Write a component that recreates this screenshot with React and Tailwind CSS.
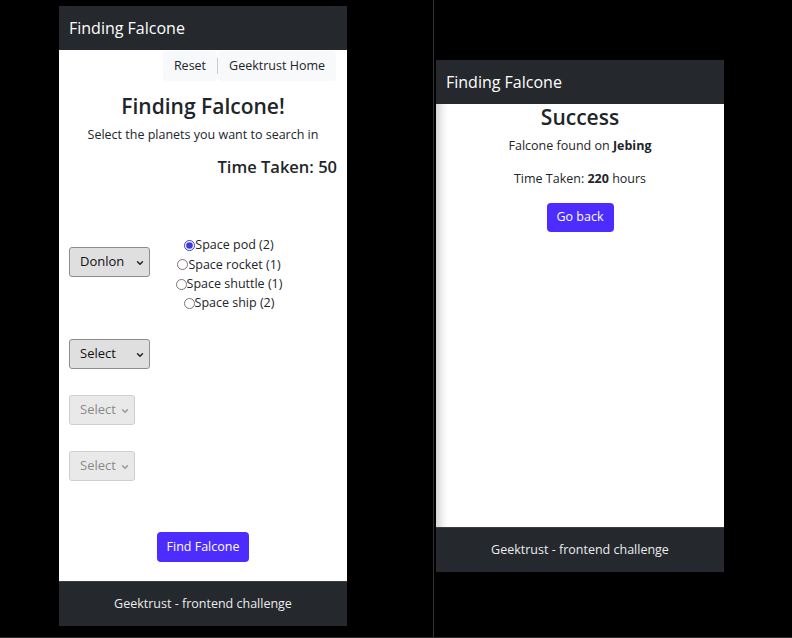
import { ChevronDown } from 'lucide-react'

const font = { fontFamily: '"Open Sans", "Noto Sans", sans-serif' }

const vessels = [
  { name: "Space pod", count: 2, checked: true },
  { name: "Space rocket", count: 1 },
  { name: "Space shuttle", count: 1 },
  { name: "Space ship", count: 2 },
]

const Header = () => (
  <div className="h-[44px] bg-[#25282c] flex items-center px-[10px] text-[16px] text-white">
    Finding Falcone
  </div>
)

const Footer = () => (
  <div className="h-[45px] bg-[#25282c] border-t border-[#3a3d42] flex items-center justify-center text-[12.5px] text-[#e9ecef]">
    Geektrust - frontend challenge
  </div>
)

const Dropdown = ({ label, disabled }) => (
  <div className={`relative h-[30px] rounded-[3px] border flex items-center pl-[10px] text-[13px] ${disabled ? 'w-[66px] bg-[#e9e9e9] border-[#cfcfcf] text-[#8a8a8a]' : 'w-[81px] bg-[#dfdfdf] border-[#8d8d8d] text-[#111]'}`}>
    <span>{label}</span>
    <ChevronDown size={10} strokeWidth={3.5} className={`absolute top-[9.5px] ${disabled ? 'right-[4px] text-[#999]' : 'right-[4px] text-[#222]'}`} />
  </div>
)

const Planner = () => (
  <div className="w-[288px] flex flex-col">
    <Header />
    <div className="h-[531px] bg-white flex flex-col text-[#212529]">
      <div className="flex justify-end pr-[11px] pt-[1px] text-[12.5px]">
        <div className="h-[30px] px-[11px] flex items-center bg-[#f8f9fa] rounded-[4px]">Reset</div>
        <div className="w-px h-[16px] bg-[#ccc] self-center"></div>
        <div className="h-[30px] px-[11px] flex items-center bg-[#f8f9fa] rounded-[4px]">Geektrust Home</div>
      </div>
      <h1 className="mt-[11px] h-[28px] leading-[28px] text-center text-[21px] font-semibold">Finding Falcone!</h1>
      <p className="mt-[5px] leading-[20px] text-center text-[12.5px]">Select the planets you want to search in</p>
      <div className="mt-[10px] leading-[24px] text-right pr-[10px] text-[16.5px] font-semibold">Time Taken: 50</div>

      <div className="mt-[57px] pl-[10px] flex items-start">
        <div className="mt-[11px]"><Dropdown label="Donlon" /></div>
        <div className="ml-[10px] w-[138px] flex flex-col items-center text-[12.5px]">
          {vessels.map((v) => (
            <label key={v.name} className="h-[19.3px] flex items-center">
              <input type="radio" name="v1" defaultChecked={v.checked} className="w-[11px] h-[11px] m-0 accent-[#3b3bd8]" />
              {v.name} ({v.count})
            </label>
          ))}
        </div>
      </div>
      <div className="mt-[26px] pl-[10px]"><Dropdown label="Select" /></div>
      <div className="mt-[26px] pl-[10px]"><Dropdown label="Select" disabled /></div>
      <div className="mt-[26px] pl-[10px]"><Dropdown label="Select" disabled /></div>

      <div className="mt-[51px] flex justify-center">
        <button className="h-[30px] w-[92px] rounded-[4px] bg-[#4d2cff] text-white text-[12.5px]">Find Falcone</button>
      </div>
    </div>
    <Footer />
  </div>
)

const Result = () => (
  <div className="w-[288px] flex flex-col">
    <Header />
    <div className="h-[423px] bg-white flex flex-col items-center text-[#212529] shadow-[inset_12px_0_10px_-8px_rgba(0,0,0,0.2)]">
      <h1 className="h-[27px] leading-[27px] text-[21px] font-semibold">Success</h1>
      <p className="mt-[5px] leading-[20px] text-[12.5px]">Falcone found on <b>Jebing</b></p>
      <p className="mt-[13px] leading-[20px] text-[12.5px]">Time Taken: <b>220</b> hours</p>
      <button className="mt-[14px] h-[29px] w-[67px] rounded-[4px] bg-[#4d2cff] text-white text-[12.5px]">Go back</button>
    </div>
    <Footer />
  </div>
)

export default function App() {
  return (
    <div style={font} className="w-[792px] h-[638px] bg-black flex border-b border-[#2e2e2e] overflow-hidden">
      <div className="w-[434px] shrink-0 pl-[59px] pt-[6px] border-r border-[#333]">
        <Planner />
      </div>
      <div className="pl-[2px] pt-[60px]">
        <Result />
      </div>
    </div>
  )
}
